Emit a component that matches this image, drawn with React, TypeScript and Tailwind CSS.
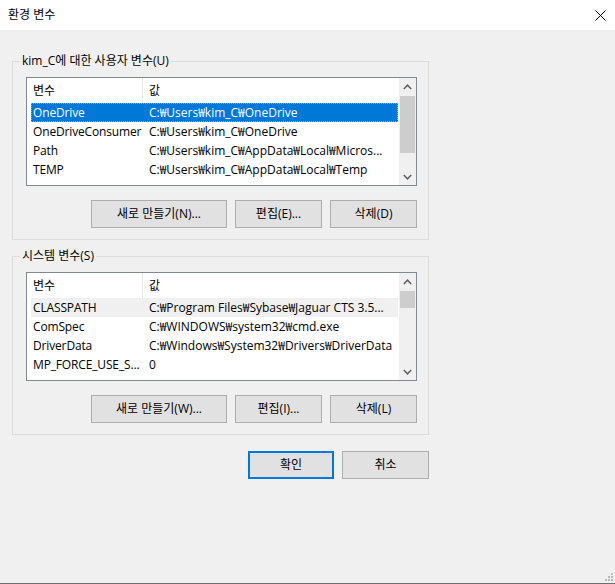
import React from "react";

const FONT = "font-['Open_Sans','Noto_Sans_CJK_KR',sans-serif]";

type Row = { name: string; value: string };

function Chevron({ up }: { up?: boolean }) {
  return (
    <svg width="9" height="6" viewBox="0 0 9 6" className="block">
      {up ? (
        <polyline points="0.8,5 4.5,1.2 8.2,5" fill="none" stroke="#606060" strokeWidth="1.5" />
      ) : (
        <polyline points="0.8,1 4.5,4.8 8.2,1" fill="none" stroke="#606060" strokeWidth="1.5" />
      )}
    </svg>
  );
}

function ListBox({
  rows,
  focused,
  thumbH,
}: {
  rows: Row[];
  focused: boolean;
  thumbH: number;
}) {
  return (
    <div className="w-[391px] h-[109px] border border-[#828790] bg-white flex overflow-hidden">
      <div className="flex-1 flex flex-col overflow-hidden">
        <div className="h-[25px] shrink-0 flex items-stretch">
          <div className="w-[115px] pl-[6px] flex items-center">변수</div>
          <div className="w-px bg-[#e5e5e5]" />
          <div className="pl-[6px] flex items-center">값</div>
        </div>
        {rows.map((r, i) => {
          const sel = i === 0;
          const cls = sel
            ? focused
              ? "bg-[#0078d7] text-white outline-1 outline-dotted outline-[#f3a14a] -outline-offset-1"
              : "bg-[#f0f0f0]"
            : "";
          return (
            <div
              key={i}
              className={`h-[19px] shrink-0 ml-[4px] mr-px flex items-center whitespace-nowrap ${cls}`}
            >
              <div className="w-[111px] shrink-0 pl-[2px] tracking-[-0.15px]">{r.name}</div>
              <div className="pl-[7px]">{r.value}</div>
            </div>
          );
        })}
      </div>
      <div className="w-[17px] shrink-0 bg-[#f0f0f0] flex flex-col">
        <div className="h-[17px] shrink-0 flex items-center justify-center">
          <Chevron up />
        </div>
        <div className="flex-1 pt-[1px]">
          <div className="mx-px bg-[#cdcdcd]" style={{ height: thumbH }} />
        </div>
        <div className="h-[17px] shrink-0 flex items-center justify-center">
          <Chevron />
        </div>
      </div>
    </div>
  );
}

function Btn({ w, children, primary }: { w: string; children: React.ReactNode; primary?: boolean }) {
  return (
    <div
      className={`${w} h-[28px] bg-[#e1e1e1] flex items-center justify-center ${
        primary ? "border-2 border-[#0078d7]" : "border border-[#adadad]"
      }`}
    >
      {children}
    </div>
  );
}

function Group({
  legend,
  rows,
  focused,
  thumbH,
  buttons,
  mt,
}: {
  legend: string;
  rows: Row[];
  focused: boolean;
  thumbH: number;
  buttons: string[];
  mt: string;
}) {
  return (
    <div className={`relative ${mt} ml-[12px] w-[417px] h-[179px] border border-[#dcdcdc] pt-[15px] pl-[13px]`}>
      <div className="absolute left-[7px] top-[-9px] px-[2px] bg-[#f0f0f0] leading-[16px]">{legend}</div>
      <ListBox rows={rows} focused={focused} thumbH={thumbH} />
      <div className="flex justify-end w-[391px] mt-[14px] gap-[8px]">
        <Btn w="w-[136px]">{buttons[0]}</Btn>
        <Btn w="w-[87px]">{buttons[1]}</Btn>
        <Btn w="w-[87px]">{buttons[2]}</Btn>
      </div>
    </div>
  );
}

export default function App() {
  const userRows: Row[] = [
    { name: "OneDrive", value: "C:₩Users₩kim_C₩OneDrive" },
    { name: "OneDriveConsumer", value: "C:₩Users₩kim_C₩OneDrive" },
    { name: "Path", value: "C:₩Users₩kim_C₩AppData₩Local₩Micros..." },
    { name: "TEMP", value: "C:₩Users₩kim_C₩AppData₩Local₩Temp" },
  ];
  const sysRows: Row[] = [
    { name: "CLASSPATH", value: "C:₩Program Files₩Sybase₩Jaguar CTS 3.5..." },
    { name: "ComSpec", value: "C:₩WINDOWS₩system32₩cmd.exe" },
    { name: "DriverData", value: "C:₩Windows₩System32₩Drivers₩DriverData" },
    { name: "MP_FORCE_USE_S...", value: "0" },
  ];
  return (
    <div className={`${FONT} text-[12px] text-black relative w-[615px] h-[584px] bg-[#f0f0f0] overflow-hidden flex flex-col`}>
      <div className="h-[30px] shrink-0 bg-white flex items-center justify-between pl-[8px] pr-[9px]">
        <span>환경 변수</span>
        <svg width="11" height="11" viewBox="0 0 11 11">
          <path d="M0.5 0.5 L10.5 10.5 M10.5 0.5 L0.5 10.5" stroke="#000" strokeWidth="1" />
        </svg>
      </div>
      <Group
        legend="kim_C에 대한 사용자 변수(U)"
        rows={userRows}
        focused={true}
        thumbH={57}
        buttons={["새로 만들기(N)...", "편집(E)...", "삭제(D)"]}
        mt="mt-[31px]"
      />
      <Group
        legend="시스템 변수(S)"
        rows={sysRows}
        focused={false}
        thumbH={17}
        buttons={["새로 만들기(W)...", "편집(I)...", "삭제(L)"]}
        mt="mt-[16px]"
      />
      <div className="flex justify-end w-[429px] mt-[16px] gap-[8px]">
        <Btn w="w-[86px]" primary>
          확인
        </Btn>
        <Btn w="w-[87px]">취소</Btn>
      </div>
      <div className="absolute right-[2px] bottom-[3px] grid grid-cols-3 gap-px w-[8px]">
        <span className="w-[2px] h-[2px]" />
        <span className="w-[2px] h-[2px]" />
        <span className="w-[2px] h-[2px] bg-[#b8b8b8]" />
        <span className="w-[2px] h-[2px]" />
        <span className="w-[2px] h-[2px] bg-[#b8b8b8]" />
        <span className="w-[2px] h-[2px] bg-[#b8b8b8]" />
        <span className="w-[2px] h-[2px] bg-[#b8b8b8]" />
        <span className="w-[2px] h-[2px] bg-[#b8b8b8]" />
        <span className="w-[2px] h-[2px] bg-[#b8b8b8]" />
      </div>
      <div className="absolute left-0 right-0 bottom-0 h-px bg-[#6e6e6e]" />
    </div>
  );
}
